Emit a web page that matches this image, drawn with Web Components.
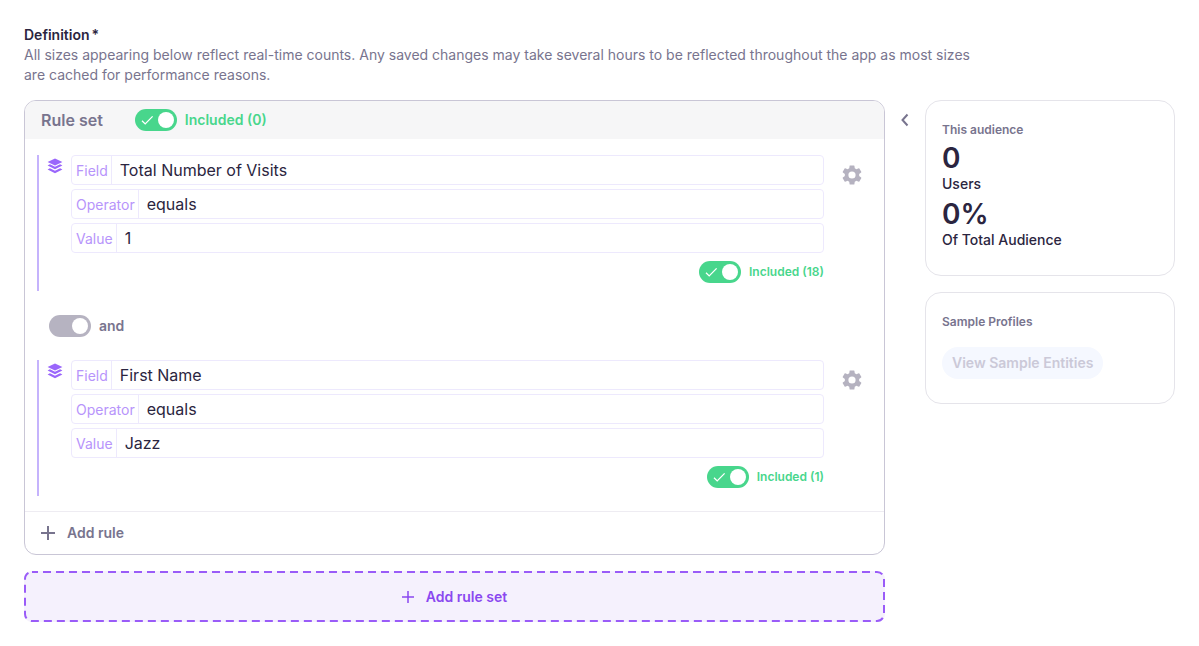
<!DOCTYPE html>
<html lang="en">
<head>
    <meta charset="UTF-8">
    <meta name="viewport" content="width=device-width, initial-scale=1.0">
    <title>Audience definition</title>
    <style>
        body {
            margin: 0;
            background-color: #fff;
            color: #2b2540;
            font-family: Inter, "Liberation Sans", sans-serif;
            font-size: 14px;
            line-height: 20px;
            --muted: #78748e;
            --green: #48d68c;
            --purple: #8a48f0;
            --lilac: #b794fb;
        }
    </style>
</head>
<body>
    <audience-page></audience-page>

    <script>
        class ToggleSwitch extends HTMLElement {
            constructor(){
                super();
                this.attachShadow({mode: 'open'});

                const checked = this.hasAttribute('checked') ? 'checked' : '';

                this.shadowRoot.innerHTML = /* html */ `
                    <style>
                        :host {
                            display: block;
                            color: var(--green);
                            font-weight: 600;
                        }
                        :host([neutral]) {
                            color: var(--muted);
                        }
                        :host([small]) {
                            font-size: 12px;
                        }
                        label {
                            display: flex;
                            align-items: center;
                            gap: 8px;
                            cursor: pointer;
                        }
                        .track {
                            display: grid;
                            align-items: center;
                            width: 42px;
                            height: 22px;
                        }
                        input, svg {
                            grid-area: 1 / 1;
                        }
                        input {
                            appearance: none;
                            display: flex;
                            align-items: center;
                            justify-content: flex-end;
                            box-sizing: border-box;
                            width: 42px;
                            height: 22px;
                            margin: 0;
                            padding: 3px;
                            border-radius: 11px;
                            background-color: #b6b3c1;
                            cursor: pointer;
                        }
                        input:checked {
                            background-color: var(--green);
                        }
                        input::before {
                            content: "";
                            width: 16px;
                            height: 16px;
                            border-radius: 50%;
                            background-color: #fff;
                        }
                        svg {
                            margin-left: 6px;
                            pointer-events: none;
                        }
                        input:not(:checked) + svg {
                            visibility: hidden;
                        }
                    </style>
                    <label>
                        <span class="track">
                            <input type="checkbox" ${checked}>
                            <svg width="13" height="12" viewBox="0 0 13 12" fill="none" stroke="#fff" stroke-width="1.3" aria-hidden="true">
                                <path d="M1 6.8 4.2 9.9 11.6 2.4"/>
                            </svg>
                        </span>
                        <span><slot></slot></span>
                    </label>
                `;
            }
        }

        class RuleField extends HTMLElement {
            constructor(){
                super();
                this.attachShadow({mode: 'open'});

                this.shadowRoot.innerHTML = /* html */ `
                    <style>
                        :host {
                            display: flex;
                            box-sizing: border-box;
                            height: 30px;
                            border: 1px solid #ede9fd;
                            border-radius: 4px;
                        }
                        label {
                            padding: 0 3px 0 4px;
                            border-right: 1px solid #ede9fd;
                            color: var(--lilac);
                            line-height: 29px;
                        }
                        input {
                            flex: 1;
                            min-width: 0;
                            padding: 0 8px;
                            border: 0;
                            outline: 0;
                            background: none;
                            color: inherit;
                            font-family: inherit;
                            font-size: 16px;
                        }
                    </style>
                    <label for="value">${this.getAttribute('label')}</label>
                    <input id="value" type="text" value="${this.getAttribute('value')}">
                `;
            }
        }

        class RuleItem extends HTMLElement {
            constructor(){
                super();
                this.attachShadow({mode: 'open'});

                this.shadowRoot.innerHTML = /* html */ `
                    <style>
                        :host {
                            display: flex;
                            align-items: flex-start;
                            padding: 0 22px 0 8px;
                            border-left: 2px solid #c5b3fc;
                        }
                        .layers {
                            flex: none;
                            margin: 3px 8px 0 0;
                        }
                        .fields {
                            display: flex;
                            flex: 1;
                            flex-direction: column;
                            gap: 4px;
                        }
                        .count {
                            display: flex;
                            justify-content: flex-end;
                            padding: 4px 0 8px;
                        }
                        button {
                            display: flex;
                            margin: 10px 0 0 18px;
                            padding: 0;
                            border: 0;
                            background: none;
                            cursor: pointer;
                        }
                    </style>
                    <svg class="layers" width="16" height="16" viewBox="0 0 16 16" fill="#9a66fb" aria-hidden="true">
                        <path d="M8 .4 15.4 4 8 7.6.6 4z"/>
                        <path d="M.6 7.6 2.9 6.3 8 8.8l5.1-2.5 2.3 1.3L8 11.3z"/>
                        <path d="M.6 11.6l2.300-1.400L8 12.700l5.100-2.500 2.300 1.400L8 15.300z"/>
                    </svg>
                    <div class="fields">
                        <slot></slot>
                        <div class="count"><slot name="count"></slot></div>
                    </div>
                    <button type="button" aria-label="Rule settings">
                        <svg width="20" height="20" viewBox="2 2 20 20" fill="#b5b2c0">
                            <path d="M19.14 12.94c.04-.3.06-.61.06-.94s-.02-.64-.07-.94l2.03-1.58a.49.49 0 0 0 .12-.61l-1.92-3.32a.488.488 0 0 0-.59-.22l-2.39.96c-.5-.38-1.03-.7-1.62-.94l-.36-2.54a.484.484 0 0 0-.48-.41h-3.84c-.24 0-.43.17-.47.41l-.36 2.54c-.59.24-1.13.57-1.62.94l-2.39-.96c-.22-.08-.47 0-.59.22L2.74 8.87c-.12.21-.08.47.12.61l2.03 1.58c-.05.3-.09.63-.09.94s.02.64.07.94l-2.03 1.58a.49.49 0 0 0-.12.61l1.92 3.32c.12.22.37.29.59.22l2.39-.96c.5.38 1.03.7 1.62.94l.36 2.54c.05.24.24.41.48.41h3.84c.24 0 .44-.17.47-.41l.36-2.54c.59-.24 1.13-.56 1.62-.94l2.39.96c.22.08.47 0 .59-.22l1.92-3.32c.12-.22.07-.47-.12-.61zM12 15.6A3.6 3.6 0 1 1 12 8.4a3.6 3.6 0 0 1 0 7.2z"/>
                        </svg>
                    </button>
                `;
            }
        }

        class RuleSet extends HTMLElement {
            constructor(){
                super();
                this.attachShadow({mode: 'open'});

                this.shadowRoot.innerHTML = /* html */ `
                    <style>
                        :host {
                            display: block;
                            overflow: hidden;
                            border: 1px solid #c9c6d6;
                            border-radius: 12px;
                        }
                        header {
                            display: flex;
                            align-items: center;
                            gap: 32px;
                            height: 38px;
                            padding: 0 16px;
                            background-color: #f6f6f7;
                        }
                        h2 {
                            margin: 0;
                            color: var(--muted);
                            font-size: 16px;
                            font-weight: 600;
                        }
                        .rules {
                            padding: 16px 0 15px 12px;
                        }
                        footer {
                            border-top: 1px solid #eeecf2;
                        }
                        button {
                            display: flex;
                            align-items: center;
                            gap: 12px;
                            height: 42px;
                            padding: 0 16px;
                            border: 0;
                            background: none;
                            color: var(--muted);
                            font: inherit;
                            font-weight: 600;
                            cursor: pointer;
                        }
                    </style>
                    <header>
                        <h2>Rule set</h2>
                        <slot name="status"></slot>
                    </header>
                    <div class="rules"><slot></slot></div>
                    <footer>
                        <button type="button">
                            <svg width="14" height="14" viewBox="0 0 14 14" stroke="currentColor" stroke-width="2" aria-hidden="true">
                                <path d="M7 0v14M0 7h14"/>
                            </svg>
                            Add rule
                        </button>
                    </footer>
                `;
            }
        }

        class AddRuleSet extends HTMLElement {
            constructor(){
                super();
                this.attachShadow({mode: 'open'});

                this.shadowRoot.innerHTML = /* html */ `
                    <style>
                        :host {
                            display: block;
                        }
                        button {
                            position: relative;
                            display: flex;
                            align-items: center;
                            justify-content: center;
                            gap: 12px;
                            width: 100%;
                            height: 51px;
                            padding: 0;
                            border: 0;
                            border-radius: 8px;
                            background-color: #f5f1fd;
                            color: var(--purple);
                            font: inherit;
                            font-weight: 600;
                            cursor: pointer;
                        }
                        .outline {
                            position: absolute;
                            inset: 1px;
                            width: calc(100% - 2px);
                            height: calc(100% - 2px);
                            overflow: visible;
                        }
                    </style>
                    <button type="button">
                        <svg class="outline" fill="none" stroke="#9a5cf8" stroke-width="2" stroke-dasharray="8 5" stroke-dashoffset="2" aria-hidden="true">
                            <rect width="100%" height="100%" rx="7"/>
                        </svg>
                        <svg width="12" height="12" viewBox="0 0 12 12" stroke="currentColor" stroke-width="1.5" aria-hidden="true">
                            <path d="M6 0v12M0 6h12"/>
                        </svg>
                        Add rule set
                    </button>
                `;
            }
        }

        class InfoCard extends HTMLElement {
            constructor(){
                super();
                this.attachShadow({mode: 'open'});

                this.shadowRoot.innerHTML = /* html */ `
                    <style>
                        :host {
                            display: block;
                            padding: 16px 16px 24px;
                            border: 1px solid #e5e4ea;
                            border-radius: 16px;
                        }
                        h3 {
                            margin: 0;
                            color: var(--muted);
                            font-size: 12px;
                            font-weight: 600;
                            line-height: 26px;
                        }
                    </style>
                    <h3>${this.getAttribute('heading')}</h3>
                    <slot></slot>
                `;
            }
        }

        class AudiencePage extends HTMLElement {
            constructor(){
                super();
                this.attachShadow({mode: 'open'});

                this.shadowRoot.innerHTML = /* html */ `
                    <style>
                        :host {
                            display: block;
                            padding: 25px 24px;
                        }
                        h1 {
                            margin: 0;
                            font-size: 14px;
                            font-weight: 600;
                        }
                        h1 span {
                            margin-left: 2px;
                        }
                        .intro {
                            max-width: 960px;
                            margin: 0 0 15px;
                            color: var(--muted);
                        }
                        main {
                            display: grid;
                            grid-template-columns: 1fr 40px 250px;
                            align-items: start;
                        }
                        .builder, aside {
                            display: grid;
                            gap: 16px;
                        }
                        .joiner {
                            padding: 24px 12px 23px;
                        }
                        .collapse {
                            display: flex;
                            justify-content: center;
                            padding: 13px 0;
                            border: 0;
                            background: none;
                            color: var(--muted);
                            cursor: pointer;
                        }
                        dl, dl div {
                            display: flex;
                            flex-direction: column;
                            margin: 0;
                        }
                        dl {
                            gap: 4px;
                        }
                        dd {
                            margin: 0;
                            font-size: 28px;
                            font-weight: 600;
                            line-height: 30px;
                        }
                        dt {
                            order: 1;
                            font-weight: 500;
                            line-height: 22px;
                        }
                        .sample {
                            display: block;
                            height: 32px;
                            margin: 12px 0 0;
                            padding: 0 10px;
                            border: 0;
                            border-radius: 16px;
                            background-color: #f5f8ff;
                            color: #cbc9d8;
                            font: inherit;
                            font-weight: 600;
                        }
                    </style>
                    <h1>Definition<span>*</span></h1>
                    <p class="intro">All sizes appearing below reflect real-time counts. Any saved changes may take several hours to be reflected throughout the app as most sizes are cached for performance reasons.</p>
                    <main>
                        <div class="builder">
                            <rule-set>
                                <toggle-switch slot="status" checked>Included (0)</toggle-switch>
                                <rule-item>
                                    <rule-field label="Field" value="Total Number of Visits"></rule-field>
                                    <rule-field label="Operator" value="equals"></rule-field>
                                    <rule-field label="Value" value="1"></rule-field>
                                    <toggle-switch slot="count" small checked>Included (18)</toggle-switch>
                                </rule-item>
                                <toggle-switch class="joiner" neutral>and</toggle-switch>
                                <rule-item>
                                    <rule-field label="Field" value="First Name"></rule-field>
                                    <rule-field label="Operator" value="equals"></rule-field>
                                    <rule-field label="Value" value="Jazz"></rule-field>
                                    <toggle-switch slot="count" small checked>Included (1)</toggle-switch>
                                </rule-item>
                            </rule-set>
                            <add-rule-set></add-rule-set>
                        </div>
                        <button class="collapse" type="button" aria-label="Toggle side panel">
                            <svg width="10" height="14" viewBox="0 0 10 14" fill="none" stroke="currentColor" stroke-width="2" aria-hidden="true">
                                <path d="M7.5 1.500 2.500 7l5 5.500"/>
                            </svg>
                        </button>
                        <aside>
                            <info-card heading="This audience">
                                <dl>
                                    <div><dt>Users</dt><dd>0</dd></div>
                                    <div><dt>Of Total Audience</dt><dd>0%</dd></div>
                                </dl>
                            </info-card>
                            <info-card heading="Sample Profiles">
                                <button class="sample" type="button" disabled>View Sample Entities</button>
                            </info-card>
                        </aside>
                    </main>
                `;
            }
        }

        customElements.define('toggle-switch', ToggleSwitch);
        customElements.define('rule-field', RuleField);
        customElements.define('rule-item', RuleItem);
        customElements.define('rule-set', RuleSet);
        customElements.define('add-rule-set', AddRuleSet);
        customElements.define('info-card', InfoCard);
        customElements.define('audience-page', AudiencePage);
    </script>
</body>
</html>
